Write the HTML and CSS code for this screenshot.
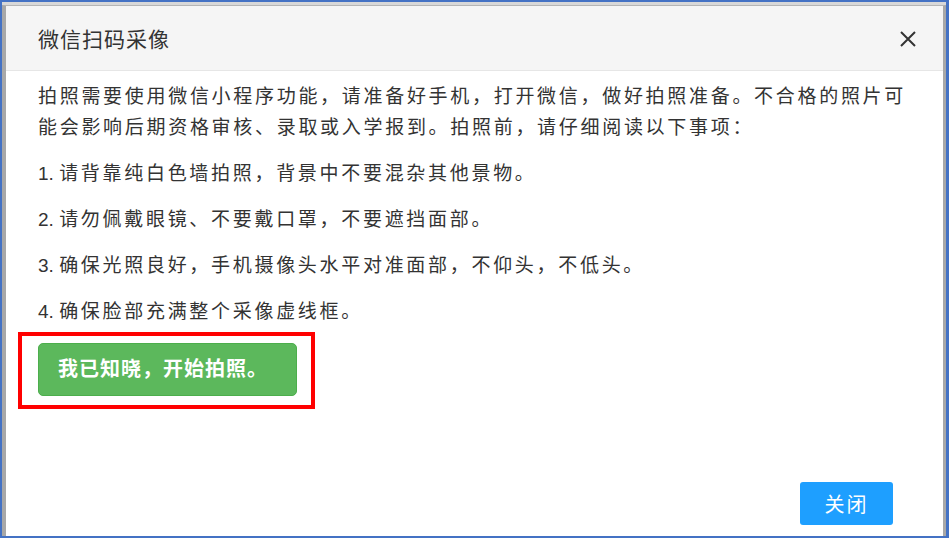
FILE: index.html
```html
<!DOCTYPE html>
<html lang="zh-CN">

<head>
    <meta charset="UTF-8">
    <meta name="viewport" content="width=device-width, initial-scale=1.0">
    <title>微信扫码采像</title>
    <link rel="stylesheet" href="styles.css">
</head>

<body>
    <!-- 截图外框 -->
    <div class="screen">
        <!-- 弹窗 -->
        <div class="dialog">
            <!-- 标题栏 -->
            <div class="dialogHead">
                <div class="dialogTitle">微信扫码采像</div>
                <div class="closeIcon">
                    <svg width="18" height="16" viewBox="0 0 18 16">
                        <path d="M2 1 L16 15 M16 1 L2 15" stroke="#333" stroke-width="2" fill="none" />
                    </svg>
                </div>
            </div>
            <!-- 内容 -->
            <div class="dialogBody">
                <p class="intro">拍照需要使用微信小程序功能，请准备好手机，打开微信，做好拍照准备。不合格的照片可能会影响后期资格审核、录取或入学报到。拍照前，请仔细阅读以下事项：</p>
                <p class="rule"><span class="num">1. </span>请背靠纯白色墙拍照，背景中不要混杂其他景物。</p>
                <p class="rule"><span class="num">2. </span>请勿佩戴眼镜、不要戴口罩，不要遮挡面部。</p>
                <p class="rule"><span class="num">3. </span>确保光照良好，手机摄像头水平对准面部，不仰头，不低头。</p>
                <p class="rule"><span class="num">4. </span>确保脸部充满整个采像虚线框。</p>
                <!-- 红框标注 -->
                <div class="markBox">
                    <div class="startBtn">我已知晓，开始拍照。</div>
                </div>
            </div>
            <!-- 底部按钮 -->
            <div class="dialogFoot">
                <div class="closeBtn">关闭</div>
            </div>
        </div>
    </div>
</body>

</html>
```

FILE: styles.css
```css
* {
    margin: 0;
    padding: 0;
    box-sizing: border-box;
}

body {
    font-family: "Liberation Sans", "Noto Sans CJK SC", sans-serif;
    color: #333;
    background: #fff;
}

.screen {
    width: 949px;
    height: 538px;
    border-top: 2px solid #4472c4;
    border-left: 2px solid #4472c4;
    border-right: 3px solid #4472c4;
    border-bottom: 2px solid #4472c4;
    background: #d8d8d8;
    padding-top: 3px;
    overflow: hidden;
}

.dialog {
    height: 100%;
    display: flex;
    flex-direction: column;
    background: #fff;
    border-top: 1px solid #b5b5b5;
    border-left: 4px solid #a8a8a8;
    border-right: 3px solid #a8a8a8;
}

.dialogHead {
    height: 65px;
    display: flex;
    align-items: center;
    justify-content: space-between;
    padding: 0 26px 0 32px;
    background: #f5f5f5;
    border-bottom: 1px solid #e6e6e6;
}

.dialogTitle {
    font-size: 21px;
    letter-spacing: 1px;
    color: #333;
}

.closeIcon {
    display: flex;
    margin-top: 1px;
}

.dialogBody {
    padding: 10px 30px 0 32px;
    font-size: 19px;
    letter-spacing: 2.7px;
    line-height: 31px;
    color: #333;
}

.num {
    letter-spacing: 0;
}

.intro {
    margin-bottom: 15px;
}

.rule {
    margin-bottom: 15px;
}

.markBox {
    width: 297px;
    margin: -10px 0 0 -20px;
    border: 4px solid #ff0000;
    padding: 7px 14px 9px 16px;
}

.startBtn {
    height: 53px;
    display: flex;
    align-items: center;
    padding-left: 19px;
    background: #5cb85c;
    border: 1px solid #4cae4c;
    border-radius: 5px;
    color: #fff;
    font-size: 20px;
    font-weight: bold;
    letter-spacing: 1px;
}

.dialogFoot {
    margin-top: auto;
    display: flex;
    justify-content: flex-end;
    padding: 0 50px 11px 0;
}

.closeBtn {
    width: 93px;
    height: 43px;
    display: flex;
    align-items: center;
    justify-content: center;
    background: #1e9fff;
    border-radius: 3px;
    color: #fff;
    font-size: 20px;
    letter-spacing: 2px;
}
```
